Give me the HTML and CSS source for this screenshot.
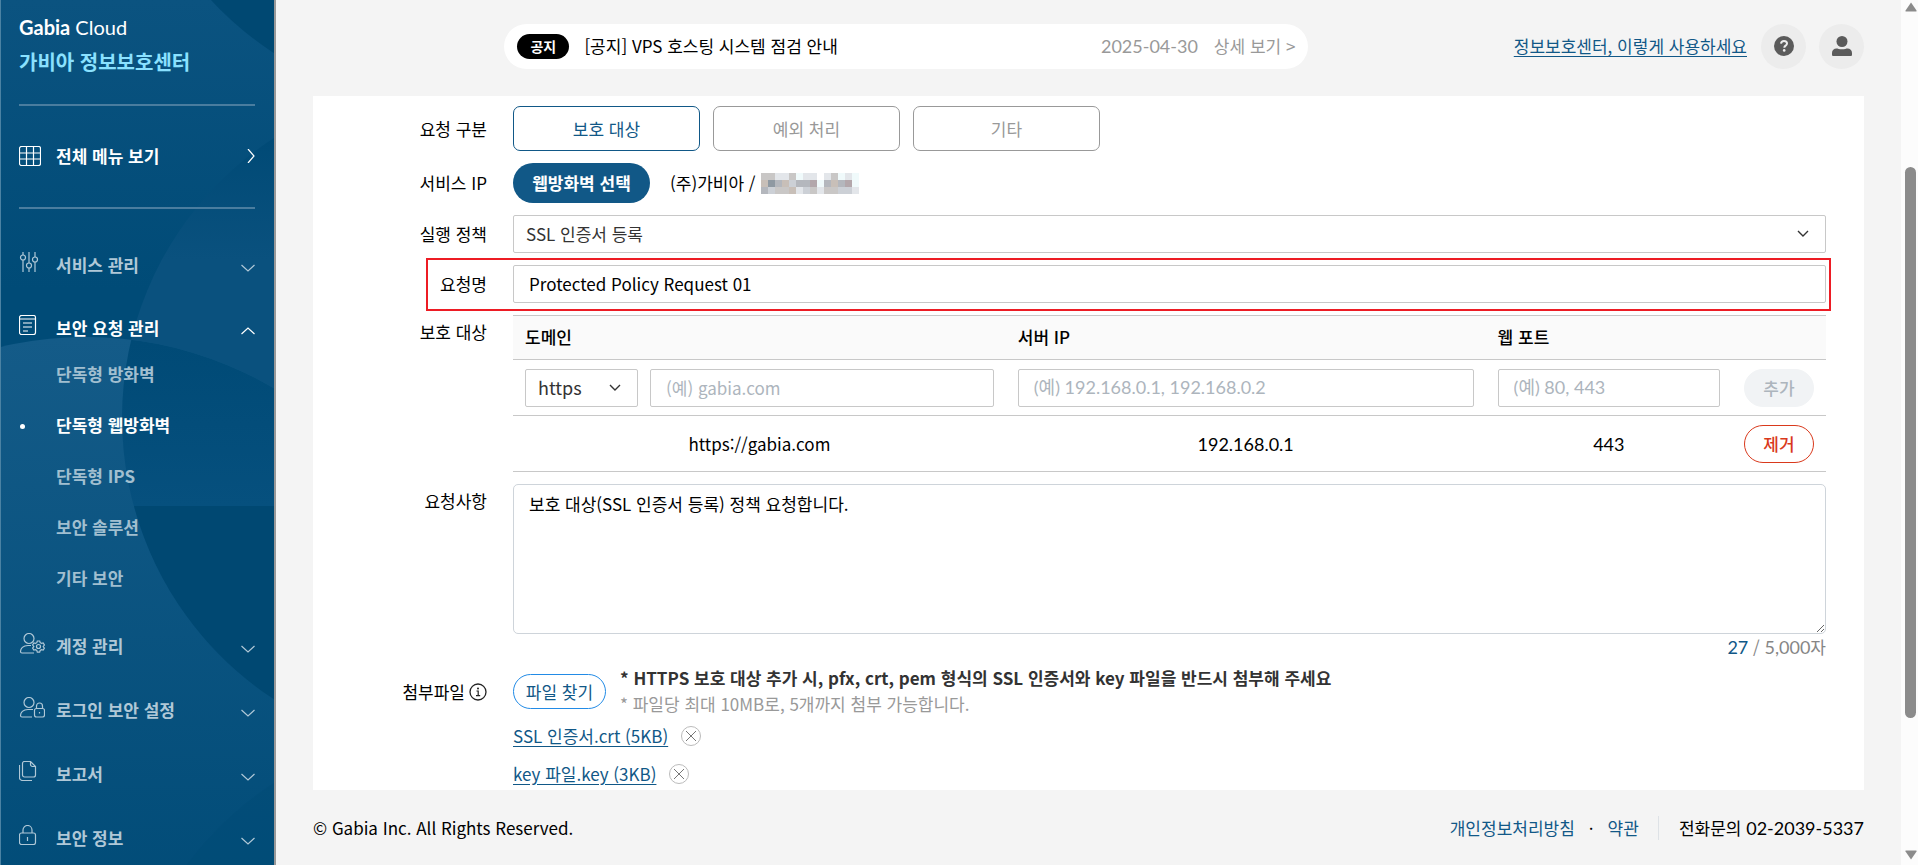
FILE: index.html
```html
<!DOCTYPE html>
<html lang="ko">
<head>
    <meta charset="UTF-8">
    <meta name="viewport" content="width=device-width, initial-scale=1.0">
    <title>가비아 정보보호센터</title>
    <link rel="stylesheet" href="styles.css">
</head>
<body>
    <div class="layout">
        <aside class="sidebar">
            <svg class="sidebar-bg" width="274" height="865" viewBox="0 0 274 865" aria-hidden="true">
                <defs>
                    <linearGradient id="gBase" gradientUnits="userSpaceOnUse" x1="0" y1="0" x2="0" y2="290">
                        <stop offset="0" stop-color="#0b5380"/><stop offset="1" stop-color="#004b77"/>
                    </linearGradient>
                    <linearGradient id="gLeft" gradientUnits="userSpaceOnUse" x1="0" y1="337" x2="0" y2="930">
                        <stop offset="0" stop-color="#145b88"/><stop offset="1" stop-color="#004b77"/>
                    </linearGradient>
                    <linearGradient id="gRight" gradientUnits="userSpaceOnUse" x1="0" y1="137" x2="0" y2="260">
                        <stop offset="0" stop-color="#004a76"/><stop offset="1" stop-color="#0a517e"/>
                    </linearGradient>
                    <linearGradient id="gLens" gradientUnits="userSpaceOnUse" x1="0" y1="341" x2="0" y2="506">
                        <stop offset="0" stop-color="#004a76"/><stop offset="1" stop-color="#06507e"/>
                    </linearGradient>
                    <clipPath id="cBig"><circle cx="85" cy="707" r="370"/></clipPath>
                </defs>
                <rect width="274" height="865" fill="url(#gBase)"/>
                <circle cx="455" cy="-227" r="334" fill="#004872"/>
                <circle cx="455" cy="418" r="334" fill="url(#gRight)"/>
                <circle cx="85" cy="707" r="370" fill="url(#gLeft)"/>
                <g clip-path="url(#cBig)">
                    <circle cx="455" cy="418" r="334" fill="url(#gLens)"/>
                </g>
                <path d="M133 506H274V700A334 334 0 0 1 133 506Z" fill="#004872"/>
                <circle cx="455" cy="1063" r="334" fill="#004a76" opacity=".4"/>
            </svg>

            <div class="brand">
                <a class="logo" href="#"><b>Gabia</b> Cloud</a>
                <a class="service" href="#">가비아 정보보호센터</a>
            </div>

            <a class="all-menu" href="#">
                <svg width="22" height="20" viewBox="0 0 22 20"><rect x=".5" y=".5" width="21" height="19" rx="2"/><path d="M7.500 .5v19M14.500 .5v19M.5 7h21M.5 13h21"/></svg>
                <span>전체 메뉴 보기</span>
                <svg class="arrow" width="14" height="14" viewBox="0 0 14 14"><path d="M7 0l6 7-6 7"/></svg>
            </a>

            <nav class="menu">
                <a class="menu-item" href="#">
                    <svg width="20" height="20" viewBox="0 0 20 20"><path d="M4 0v3M4 8v12M10 0v11M10 16v4M16 0v5M16 10v10"/><circle cx="4" cy="5.500" r="2.500"/><circle cx="10" cy="13.500" r="2.500"/><circle cx="16" cy="7.500" r="2.500"/></svg>
                    <span>서비스 관리</span>
                    <svg class="arrow" width="14" height="8" viewBox="0 0 14 8"><path d="M.5 1l6.500 6 6.500-6"/></svg>
                </a>
                <a class="menu-item open" href="#">
                    <svg width="18" height="20" viewBox="0 0 18 20"><rect x=".5" y=".5" width="16" height="19" rx="2"/><path d="M.5 4h16M4 8h9M4 12h9M4 16h5"/></svg>
                    <span>보안 요청 관리</span>
                    <svg class="arrow" width="14" height="8" viewBox="0 0 14 8"><path d="M.5 7l6.500-6 6.500 6"/></svg>
                </a>
                <ul class="submenu">
                    <li><a href="#">단독형 방화벽</a></li>
                    <li class="active"><a href="#">단독형 웹방화벽</a></li>
                    <li><a href="#">단독형 IPS</a></li>
                    <li><a href="#">보안 솔루션</a></li>
                    <li><a href="#">기타 보안</a></li>
                </ul>
                <a class="menu-item" href="#">
                    <svg width="26" height="21" viewBox="0 0 26 21"><circle cx="10" cy="5.500" r="5"/><path d="M12 12.500H9c-5 0-7.500 3-7.500 6 0 1 .5 1.500 1.500 1.500h12"/><circle cx="19.500" cy="13.500" r="2"/><path d="M18.300 8h2.400l.5 1.700 1.300.7 1.700-.4 1.200 2-1.200 1.500 1.200 1.600-1.200 2-1.700-.4-1.300.7-.5 1.700h-2.400l-.5-1.700-1.300-.7-1.700.4-1.200-2 1.200-1.600-1.200-1.500 1.200-2 1.700.4 1.300-.7z"/></svg>
                    <span>계정 관리</span>
                    <svg class="arrow" width="14" height="8" viewBox="0 0 14 8"><path d="M.5 1l6.500 6 6.500-6"/></svg>
                </a>
                <a class="menu-item" href="#">
                    <svg width="26" height="21" viewBox="0 0 26 21"><circle cx="10" cy="5.500" r="5"/><path d="M14 12.500H9c-5 0-7.500 3-7.500 6 0 1 .5 1.500 1.500 1.500h10"/><rect x="15.500" y="11.500" width="10" height="8.500" rx="2"/><path d="M17.500 11.500V9a3 3 0 0 1 6 0v2.500M20.500 15v1.500"/></svg>
                    <span>로그인 보안 설정</span>
                    <svg class="arrow" width="14" height="8" viewBox="0 0 14 8"><path d="M.5 1l6.500 6 6.500-6"/></svg>
                </a>
                <a class="menu-item" href="#">
                    <svg width="18" height="20" viewBox="0 0 18 20"><path d="M5.500 .5h6l5 5v8.500a2 2 0 0 1-2 2h-9a2 2 0 0 1-2-2V2.500a2 2 0 0 1 2-2zM11.500 .5v3a2 2 0 0 0 2 2h3M.5 4v12.500a3 3 0 0 0 3 3H13"/></svg>
                    <span>보고서</span>
                    <svg class="arrow" width="14" height="8" viewBox="0 0 14 8"><path d="M.5 1l6.500 6 6.500-6"/></svg>
                </a>
                <a class="menu-item" href="#">
                    <svg width="18" height="20" viewBox="0 0 18 20"><rect x=".5" y="8" width="16" height="11.500" rx="2"/><path d="M4 8V5a4.500 4.500 0 0 1 9 0v3M8.500 12v4"/></svg>
                    <span>보안 정보</span>
                    <svg class="arrow" width="14" height="8" viewBox="0 0 14 8"><path d="M.5 1l6.500 6 6.500-6"/></svg>
                </a>
            </nav>
        </aside>

        <div class="content">
            <header class="header">
                <div class="notice-wrap">
                    <div class="notice">
                        <span class="badge">공지</span>
                        <span class="notice-title">[공지] VPS 호스팅 시스템 점검 안내</span>
                        <span class="num">2025-04-30</span>
                        <a href="#">상세 보기 &gt;</a>
                    </div>
                </div>
                <a class="guide" href="#">정보보호센터, 이렇게 사용하세요</a>
                <div class="header-buttons">
                    <button type="button" class="icon-btn" aria-label="도움말">
                        <svg width="20" height="20" viewBox="0 0 20 20"><circle cx="10" cy="10" r="10" fill="#5b5b5b"/><path d="M7 7.700C7.200 5.800 8.400 5 10 5c1.800 0 3 1 3 2.500 0 2.200-2.700 2.100-2.700 4.200" fill="none" stroke="#ececec" stroke-width="2"/><circle cx="10.200" cy="14.400" r="1.300" fill="#ececec"/></svg>
                    </button>
                    <button type="button" class="icon-btn" aria-label="내 정보">
                        <svg width="20" height="20" viewBox="0 0 20 20"><circle cx="10" cy="5.500" r="5.500" fill="#5b5b5b"/><path d="M0 18.500V17c0-3 2-4.500 4.500-4.500 1 0 3 .8 5.500.8s4.500-.8 5.500-.8c2.500 0 4.500 1.500 4.500 4.500v1.500c0 1-.5 1.500-1.500 1.500h-17C.5 20 0 19.500 0 18.500z" fill="#5b5b5b"/></svg>
                    </button>
                </div>
            </header>

            <main class="card">
                <form class="form">
                    <div class="row">
                        <span class="label">요청 구분</span>
                        <div class="field types">
                            <button type="button" class="type selected">보호 대상</button>
                            <button type="button" class="type">예외 처리</button>
                            <button type="button" class="type">기타</button>
                        </div>
                    </div>
                    <div class="row">
                        <span class="label">서비스 IP</span>
                        <div class="field service-ip">
                            <button type="button" class="btn-waf">웹방화벽 선택</button>
                            <span>(주)가비아 /</span>
                            <svg class="masked" width="98" height="21" viewBox="0 0 14 3" shape-rendering="crispEdges" aria-hidden="true">
                                <path d="M0 0h2v1h-2zM4 0h1v1h-1zM10 0h1v1h-1zM2 2h2v1h-2zM9 2h2v1h-2zM7 2h1v1h-1z" fill="#c9c7c6"/>
                                <path d="M2 0h2v1h-2zM6 0h2v1h-2zM9 0h1v1h-1zM12 0h1v1h-1zM5 2h1v1h-1zM8 2h1v1h-1zM13 2h1v1h-1z" fill="#e3e6ea"/>
                                <path d="M5 0h1v1h-1zM11 0h1v1h-1zM8 1h1v1h-1zM13 0h1v2h-1z" fill="#f0fafb"/>
                                <path d="M0 1h1v1h-1zM3 1h1v1h-1zM10 1h1v1h-1zM4 2h1v1h-1z" fill="#c8bfb8"/>
                                <path d="M1 1h1v1h-1z" fill="#8f99a2"/>
                                <path d="M2 1h1v1h-1zM5 1h2v1h-2zM9 1h1v1h-1zM11 1h1v1h-1zM0 2h1v1h-1z" fill="#b4b7bd"/>
                                <path d="M7 1h1v1h-1zM12 1h1v1h-1z" fill="#b3a7ab"/>
                                <path d="M4 1h1v1h-1zM6 2h1v1h-1zM11 2h2v1h-2zM1 2h1v1h-1z" fill="#ccd0d6"/>
                            </svg>
                        </div>
                    </div>
                    <div class="row">
                        <label class="label" for="policy">실행 정책</label>
                        <select id="policy" class="field select">
                            <option>SSL 인증서 등록</option>
                        </select>
                    </div>
                    <div class="row highlight">
                        <label class="label" for="reqName">요청명</label>
                        <input id="reqName" class="field input" type="text" value="Protected Policy Request 01">
                    </div>
                    <div class="row top">
                        <span class="label">보호 대상</span>
                        <table class="field targets">
                            <thead>
                                <tr>
                                    <th class="col-domain">도메인</th>
                                    <th class="col-ip">서버 IP</th>
                                    <th class="col-port">웹 포트</th>
                                    <th class="col-action"></th>
                                </tr>
                            </thead>
                            <tbody>
                                <tr>
                                    <td>
                                        <div class="domain">
                                            <select class="select protocol" aria-label="프로토콜">
                                                <option>https</option>
                                            </select>
                                            <input class="input" type="text" placeholder="(예) gabia.com" aria-label="도메인">
                                        </div>
                                    </td>
                                    <td><input class="input num" type="text" placeholder="(예) 192.168.0.1, 192.168.0.2" aria-label="서버 IP"></td>
                                    <td><input class="input num" type="text" placeholder="(예) 80, 443" aria-label="웹 포트"></td>
                                    <td><button type="button" class="pill" disabled>추가</button></td>
                                </tr>
                                <tr>
                                    <td>https://gabia.com</td>
                                    <td class="num">192.168.0.1</td>
                                    <td class="num">443</td>
                                    <td><button type="button" class="pill remove">제거</button></td>
                                </tr>
                            </tbody>
                        </table>
                    </div>
                    <div class="row top">
                        <label class="label" for="detail">요청사항</label>
                        <div class="field">
                            <textarea id="detail" class="textarea">보호 대상(SSL 인증서 등록) 정책 요청합니다.</textarea>
                            <p class="counter"><b class="num">27</b> / <span class="num">5,000</span>자</p>
                        </div>
                    </div>
                    <div class="row attach">
                        <span class="label">첨부파일
                            <svg width="18" height="18" viewBox="0 0 18 18"><circle cx="9" cy="9" r="8" fill="none" stroke="#222" stroke-width="1.300"/><circle cx="9" cy="5.500" r="1" fill="#222"/><path d="M7.500 8h1.700v4.500M7 12.700h4.200" fill="none" stroke="#222" stroke-width="1.200"/></svg>
                        </span>
                        <div class="field attach-field">
                            <button type="button" class="btn-file">파일 찾기</button>
                            <div class="notes">
                                <strong>* HTTPS 보호 대상 추가 시, pfx, crt, pem 형식의 SSL 인증서와 key 파일을 반드시 첨부해 주세요</strong>
                                <p>* 파일당 최대 10MB로, 5개까지 첨부 가능합니다.</p>
                            </div>
                        </div>
                    </div>
                    <ul class="files">
                        <li>
                            <a href="#">SSL 인증서.crt (5KB)</a>
                            <button type="button" aria-label="파일 삭제"><svg width="20" height="20" viewBox="0 0 20 20"><circle cx="10" cy="10" r="9.500" stroke="#bbb"/><path d="M5 5l10 10M15 5L5 15" stroke="#777"/></svg></button>
                        </li>
                        <li>
                            <a href="#">key 파일.key (3KB)</a>
                            <button type="button" aria-label="파일 삭제"><svg width="20" height="20" viewBox="0 0 20 20"><circle cx="10" cy="10" r="9.500" stroke="#bbb"/><path d="M5 5l10 10M15 5L5 15" stroke="#777"/></svg></button>
                        </li>
                    </ul>
                </form>
            </main>

            <footer class="footer">
                <span>© Gabia Inc. All Rights Reserved.</span>
                <div class="footer-links">
                    <a href="#">개인정보처리방침</a>
                    <span>·</span>
                    <a href="#">약관</a>
                    <span class="tel">전화문의 <span class="num">02-2039-5337</span></span>
                </div>
            </footer>
        </div>

        <div class="scrollbar" aria-hidden="true">
            <svg width="12" height="10" viewBox="0 0 12 10"><path d="M6 0.500L11.500 8.500Q12 9.500 11 9.500H1Q0 9.500 .5 8.500z"/></svg>
            <div class="track"><div class="thumb"></div></div>
            <svg width="12" height="10" viewBox="0 0 12 10"><path d="M6 9.500L11.500 1.500Q12 .5 11 .5H1Q0 .5 .5 1.500z"/></svg>
        </div>
    </div>
</body>
</html>
```
FILE: styles.css
```css
* {
    box-sizing: border-box;
}
body {
    margin: 0;
    font-family: "Noto Sans CJK KR", sans-serif;
    font-size: 17px;
    line-height: 24px;
    color: #000;
    background-color: #f4f4f4;
}
button, input, select, textarea {
    font: inherit;
    color: inherit;
    margin: 0;
}
button {
    padding: 0;
    cursor: pointer;
}
a {
    color: #115887;
    text-decoration: none;
}
p, ul {
    margin: 0;
    padding: 0;
    list-style: none;
}
.num {
    font-family: Lato, "Noto Sans CJK KR", sans-serif;
    font-size: 18px;
}
.layout {
    display: grid;
    grid-template-columns: 276px 1fr 17px;
    grid-template-rows: 100vh;
    overflow: hidden;
}

/* sidebar */
.sidebar {
    position: relative;
    overflow: hidden;
    padding: 0 19px 0 18px;
    border-left: 1px solid #4b82a3;
    border-right: 2px solid #999;
    background-color: #0b5380;
}
.sidebar-bg {
    position: absolute;
    top: 0;
    left: 0;
}
.brand, .all-menu, .menu {
    position: relative;
}
.brand {
    display: flex;
    flex-direction: column;
    height: 106px;
    padding-top: 11px;
    border-bottom: 2px solid #4a7d9f;
}
.logo {
    line-height: 32px;
    font-family: Lato, sans-serif;
    font-size: 20px;
    color: #fff;
}
.service {
    line-height: 38px;
    font-size: 20px;
    font-weight: 700;
    color: #8ae1ff;
}
.all-menu, .menu-item {
    display: grid;
    grid-template-columns: 37px 1fr 14px;
    align-items: center;
    font-weight: 700;
    color: #fff;
}
.all-menu svg, .menu-item svg {
    fill: none;
    stroke: currentColor;
    stroke-width: 1.2;
}
.all-menu {
    height: 103px;
    padding-bottom: 2px;
    border-bottom: 2px solid #4a7d9f;
}
.menu {
    padding-top: 24px;
}
.menu-item {
    height: 64px;
    color: #b0c8d7;
}
.menu-item.open {
    height: 62px;
    color: #fff;
}
.menu-item .arrow {
    margin-top: 6px;
}
.menu-item svg:first-child {
    margin-bottom: 6px;
}
.submenu li {
    position: relative;
    height: 51px;
    padding-left: 37px;
    line-height: 30px;
}
.submenu a {
    font-weight: 700;
    color: #a1bfd0;
}
.submenu .active a {
    color: #fff;
}
.submenu .active::before {
    content: "";
    position: absolute;
    left: 1px;
    top: 14px;
    width: 5px;
    height: 5px;
    border-radius: 50%;
    background-color: #fff;
}

/* header */
.content {
    display: flex;
    flex-direction: column;
    padding: 0 37px;
}
.header {
    display: flex;
    align-items: center;
    gap: 14px;
    height: 96px;
    padding-bottom: 4px;
}
.notice-wrap {
    flex: 1;
    display: flex;
    justify-content: center;
}
.notice {
    display: flex;
    align-items: center;
    width: 804px;
    height: 45px;
    padding: 0 13px;
    border-radius: 23px;
    background-color: #fff;
    color: #999;
}
.notice a {
    margin-left: 16px;
    color: #999;
}
.badge {
    width: 52px;
    height: 25px;
    border-radius: 13px;
    background-color: #000;
    color: #fff;
    font-size: 14px;
    font-weight: 700;
    line-height: 25px;
    text-align: center;
}
.notice-title {
    flex: 1;
    margin-left: 15px;
    color: #000;
}
.guide {
    text-decoration: underline;
    text-underline-offset: 3px;
}
.header-buttons {
    display: flex;
    gap: 13px;
}
.icon-btn {
    display: flex;
    align-items: center;
    justify-content: center;
    width: 45px;
    height: 45px;
    border: 0;
    border-radius: 50%;
    background-color: #ececec;
}

/* form */
.card {
    flex: 1;
    padding: 10px 38px 0 0;
    background-color: #fff;
}
.form {
    display: flex;
    flex-direction: column;
    gap: 12px;
}
.row {
    display: grid;
    grid-template-columns: 174px 1fr;
    column-gap: 26px;
    align-items: center;
    position: relative;
}
.row.top {
    align-items: start;
}
.row.top .label {
    line-height: 34px;
}
.label {
    text-align: right;
}
.types {
    display: flex;
    gap: 13px;
}
.type {
    width: 187px;
    height: 45px;
    border: 1px solid #999;
    border-radius: 7px;
    background-color: #fff;
    color: #999;
}
.type.selected {
    border-color: #115887;
    color: #115887;
}
.service-ip {
    display: flex;
    align-items: center;
}
.btn-waf {
    width: 137px;
    height: 40px;
    margin-right: 20px;
    border: 0;
    border-radius: 20px;
    background-color: #115887;
    color: #fff;
    font-weight: 700;
}
.masked {
    margin-left: 5px;
}
.input, .select {
    width: 100%;
    height: 38px;
    border: 1px solid #c8c8c8;
    border-radius: 2px;
    background-color: #fff;
    padding: 0 15px 1px;
}
.select {
    appearance: none;
    padding: 0 12px 1px;
    color: #333;
    background-image: url("data:image/svg+xml,%3Csvg xmlns='http://www.w3.org/2000/svg' width='12' height='8'%3E%3Cpath d='M1 1l5 5 5-5' fill='none' stroke='%23333' stroke-width='1.4'/%3E%3C/svg%3E");
    background-repeat: no-repeat;
    background-position: right 16px center;
}
.input::placeholder {
    color: #adb5bd;
    opacity: 1;
}
.highlight::after {
    content: "";
    position: absolute;
    inset: -7px -5px -8px 113px;
    border: 2px solid #ed1c24;
    pointer-events: none;
}
.targets {
    width: 100%;
    table-layout: fixed;
    border-collapse: collapse;
    border-top: 1px solid #c8c8c8;
}
.targets th {
    height: 44px;
    padding: 0 12px 2px;
    background-color: #fafafa;
    font-weight: 500;
    text-align: left;
}
.targets td {
    height: 56px;
    padding: 0 12px;
    text-align: center;
}
.targets tr {
    border-bottom: 1px solid #c8c8c8;
}
.col-domain {
    width: 38%;
}
.col-ip {
    width: 37%;
}
.col-port {
    width: 19%;
}
.col-action {
    width: 94px;
}
.domain {
    display: flex;
    gap: 12px;
}
.domain .protocol {
    flex: 0 0 113px;
    font-size: 18px;
}
.pill {
    display: block;
    width: 70px;
    height: 38px;
    border: 1px solid #f1f3f5;
    border-radius: 19px;
    background-color: #f1f3f5;
    color: #adb5bd;
    font-weight: 500;
}
.pill.remove {
    border-color: #d9391c;
    background-color: #fff;
    color: #d9391c;
}
.textarea {
    display: block;
    width: 100%;
    height: 150px;
    padding: 7px 15px;
    border: 1px solid #ced4da;
    border-radius: 5px;
    resize: vertical;
}
.counter {
    height: 28px;
    line-height: 26px;
    text-align: right;
    color: #868686;
}
.counter b {
    font-weight: 400;
    color: #115887;
}
.attach .label {
    display: flex;
    align-items: center;
    justify-content: flex-end;
    gap: 4px;
}
.attach-field {
    display: flex;
    align-items: center;
    gap: 14px;
    height: 35px;
}
.btn-file {
    width: 93px;
    height: 35px;
    border: 1px solid #228be6;
    border-radius: 18px;
    background-color: #fff;
    color: #115887;
}
.notes {
    padding-bottom: 2px;
    line-height: 26px;
    color: #999;
}
.notes strong {
    color: #333;
}
.files {
    display: flex;
    flex-direction: column;
    gap: 8px;
    margin-left: 200px;
}
.files li {
    display: flex;
    align-items: center;
    gap: 13px;
    height: 30px;
}
.files a {
    text-decoration: underline;
    text-underline-offset: 3px;
}
.files button {
    display: flex;
    border: 0;
    background: none;
}
.files svg {
    fill: none;
}

/* footer */
.footer {
    display: flex;
    align-items: center;
    justify-content: space-between;
    flex: none;
    height: 75px;
}
.footer-links {
    display: flex;
    align-items: center;
    gap: 14px;
}
.tel {
    margin-left: 5px;
    padding-left: 20px;
    border-left: 1px solid #dee2e6;
}

/* scrollbar */
.scrollbar {
    display: flex;
    flex-direction: column;
    align-items: center;
    padding: 2px 0 5px 2px;
    background-color: #fcfcfc;
    fill: #8b8b8b;
}
.track {
    flex: 1;
    padding-top: 155px;
}
.thumb {
    width: 11px;
    height: 551px;
    border-radius: 6px;
    background-color: #8b8b8b;
}
```
